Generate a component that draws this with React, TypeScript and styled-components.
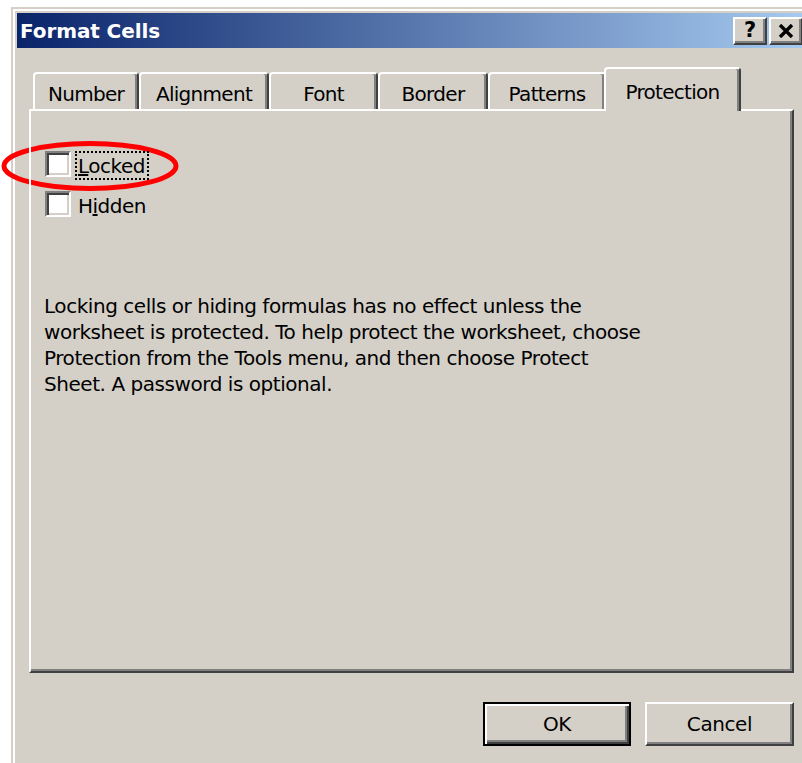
import React from "react";
import styled, { createGlobalStyle } from "styled-components";

const face = "#d4d0c8";
const shadow = "#808080";
const darkShadow = "#404040";
const highlight = "#ffffff";

const GlobalStyle = createGlobalStyle`
  html, body {
    margin: 0;
    padding: 0;
    background: #fff;
    overflow: hidden;
  }
  body {
    font-family: "DejaVu Sans", sans-serif;
    color: #000;
  }
`;

const Page = styled.div`
  position: relative;
  width: 802px;
  height: 763px;
  padding: 7px 0 0 11px;
  box-sizing: border-box;
  overflow: hidden;
`;

const Window = styled.div`
  width: 802px;
  height: 800px;
  box-sizing: border-box;
  border: 2px solid ${face};
  box-shadow: inset 2px 2px 0 ${highlight};
  padding: 4px;
  background: ${face};
  display: flex;
  flex-direction: column;
`;

const TitleBar = styled.div`
  flex: none;
  height: 35px;
  display: flex;
  align-items: center;
  padding: 0 4px 0 3px;
  background: linear-gradient(to right, #0a246a, #a6caf0);
`;

const Title = styled.div`
  flex: 1;
  color: #fff;
  font-size: 20px;
  font-weight: bold;
  letter-spacing: -0.1px;
`;

const CaptionButtons = styled.div`
  display: flex;
  gap: 2px;
`;

const CaptionButton = styled.div`
  width: 34px;
  height: 28px;
  box-sizing: border-box;
  display: flex;
  align-items: center;
  justify-content: center;
  background: ${face};
  border-top: 2px solid ${highlight};
  border-left: 2px solid ${highlight};
  border-right: 2px solid ${darkShadow};
  border-bottom: 2px solid ${darkShadow};
  box-shadow: inset -2px -2px 0 ${shadow};
  font-size: 21px;
  font-weight: bold;
  line-height: 1;
`;

const Body = styled.div`
  flex: 1;
  display: flex;
  flex-direction: column;
  padding: 19px 13px 0 12px;
`;

const TabRow = styled.div`
  display: flex;
  align-items: flex-end;
  height: 42px;
  padding-left: 4px;
`;

const Tab = styled.div<{ $width: number; $active?: boolean }>`
  position: relative;
  z-index: ${(p) => (p.$active ? 2 : 1)};
  flex: none;
  box-sizing: border-box;
  width: ${(p) => p.$width}px;
  height: ${(p) => (p.$active ? 44 : 37)}px;
  margin: ${(p) => (p.$active ? "0 -2px -2px" : "0")};
  padding-top: ${(p) => (p.$active ? 11 : 8)}px;
  display: flex;
  justify-content: center;
  background: ${face};
  border-top: 2px solid ${highlight};
  border-left: 2px solid ${highlight};
  border-right: 2px solid ${darkShadow};
  border-radius: 4px 4px 0 0;
  box-shadow: inset -2px 0 0 ${shadow};
  font-size: 20px;
  line-height: 24px;
  letter-spacing: -0.7px;
`;

const Panel = styled.div`
  position: relative;
  z-index: 1;
  height: 564px;
  box-sizing: border-box;
  padding: 40px 13px 0 13px;
  border-top: 2px solid ${highlight};
  border-left: 2px solid ${highlight};
  border-right: 2px solid ${darkShadow};
  border-bottom: 2px solid ${darkShadow};
  box-shadow: inset -2px -2px 0 ${shadow};
`;

const CheckRow = styled.div`
  display: flex;
  align-items: flex-start;
  height: 40px;
  padding-left: 1px;
`;

const CheckBox = styled.div`
  width: 26px;
  height: 26px;
  box-sizing: border-box;
  background: #fff;
  border-top: 2px solid ${shadow};
  border-left: 2px solid ${shadow};
  border-right: 2px solid ${highlight};
  border-bottom: 2px solid ${highlight};
  box-shadow: inset 2px 2px 0 ${darkShadow}, inset -2px -2px 0 ${face};
`;

const CheckLabel = styled.div<{ $focused?: boolean }>`
  margin-left: 4px;
  height: 29px;
  box-sizing: border-box;
  padding: 1px 2px 0 1px;
  border: 2px dotted ${(p) => (p.$focused ? "#000" : "transparent")};
  font-size: 20px;
  line-height: 25px;
  letter-spacing: -0.5px;
`;

const Note = styled.p`
  margin: 62px 0 0;
  font-size: 20px;
  line-height: 26px;
  letter-spacing: -0.45px;
`;

const ButtonRow = styled.div`
  display: flex;
  justify-content: flex-end;
  gap: 14px;
  margin-top: 29px;
`;

const PushButton = styled.div<{ $width: number; $default?: boolean }>`
  width: ${(p) => p.$width}px;
  height: 44px;
  box-sizing: border-box;
  display: flex;
  align-items: center;
  justify-content: center;
  background: ${face};
  font-size: 20px;
  letter-spacing: -0.4px;
  ${(p) =>
    p.$default
      ? `
    border: 2px solid #000;
    box-shadow: inset 2px 2px 0 ${highlight}, inset -2px -2px 0 ${darkShadow}, inset -4px -4px 0 ${shadow};
  `
      : `
    border-top: 2px solid ${highlight};
    border-left: 2px solid ${highlight};
    border-right: 2px solid ${darkShadow};
    border-bottom: 2px solid ${darkShadow};
    box-shadow: inset -2px -2px 0 ${shadow};
  `}
`;

const Marker = styled.svg`
  position: absolute;
  left: 0;
  top: 140px;
  pointer-events: none;
`;

const tabs = [
  { label: "Number", width: 106 },
  { label: "Alignment", width: 130 },
  { label: "Font", width: 109 },
  { label: "Border", width: 110 },
  { label: "Patterns", width: 118 },
  { label: "Protection", width: 137, active: true },
];

function CloseGlyph() {
  return (
    <svg width="16" height="14" viewBox="0 0 16 14">
      <path d="M2 1 L14 13 M14 1 L2 13" stroke="#000" strokeWidth="3.4" />
    </svg>
  );
}

export default function App() {
  return (
    <>
      <GlobalStyle />
      <Page>
        <Window>
          <TitleBar>
            <Title>Format Cells</Title>
            <CaptionButtons>
              <CaptionButton>?</CaptionButton>
              <CaptionButton>
                <CloseGlyph />
              </CaptionButton>
            </CaptionButtons>
          </TitleBar>

          <Body>
            <TabRow>
              {tabs.map((t) => (
                <Tab key={t.label} $width={t.width} $active={t.active}>
                  {t.label}
                </Tab>
              ))}
            </TabRow>

            <Panel>
              <CheckRow>
                <CheckBox />
                <CheckLabel $focused>
                  <u>L</u>ocked
                </CheckLabel>
              </CheckRow>
              <CheckRow>
                <CheckBox />
                <CheckLabel>
                  H<u>i</u>dden
                </CheckLabel>
              </CheckRow>

              <Note>
                Locking cells or hiding formulas has no effect unless the
                <br />
                worksheet is protected. To help protect the worksheet, choose
                <br />
                Protection from the Tools menu, and then choose Protect
                <br />
                Sheet. A password is optional.
              </Note>
            </Panel>

            <ButtonRow>
              <PushButton $width={148} $default>
                OK
              </PushButton>
              <PushButton $width={149}>Cancel</PushButton>
            </ButtonRow>
          </Body>
        </Window>

        <Marker width="184" height="54" viewBox="0 0 184 54">
          <ellipse cx="90" cy="26" rx="86" ry="22.5" fill="none" stroke="#f00" strokeWidth="5" />
        </Marker>
      </Page>
    </>
  );
}
